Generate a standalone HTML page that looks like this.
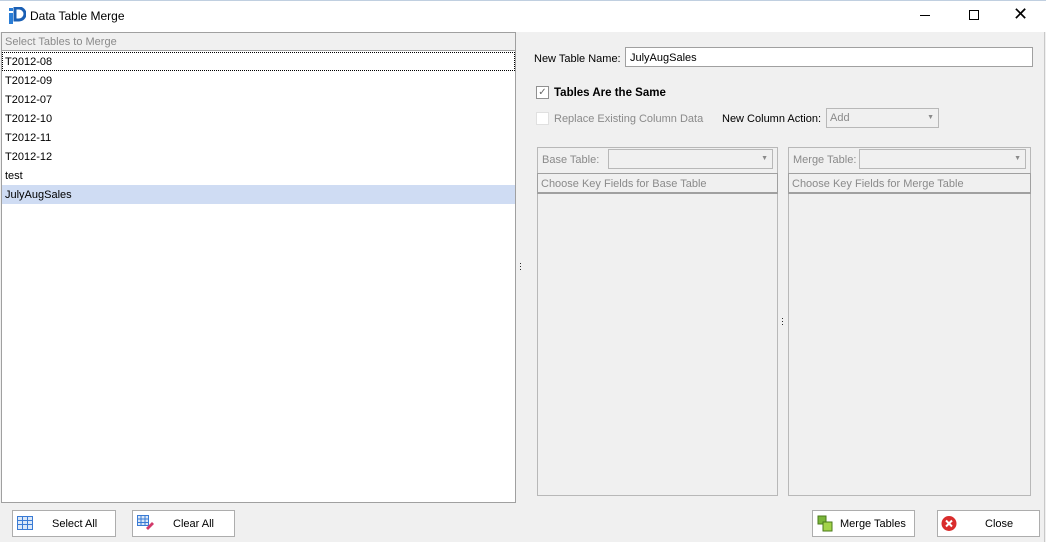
<html><head><style>
body{margin:0;width:1046px;height:542px;background:#f0f0f0;font-family:"Liberation Sans",sans-serif;font-size:11px;color:#000;position:relative;overflow:hidden}
.a{position:absolute}
.row{position:absolute;left:2px;width:513px;height:19px;line-height:21px;padding-left:3px;box-sizing:border-box}
.btn{position:absolute;top:510px;height:27px;border:1px solid #adadad;background:#fff;box-sizing:border-box;line-height:27px}
.g{color:#8a8a8a}
</style></head><body>
<div class="a" style="left:0;top:0;width:1046px;height:32px;background:#fff;border-top:1px solid #c0cfe0;box-sizing:border-box"></div>
<svg class="a" style="left:8px;top:7px" width="18" height="18" viewBox="0 0 18 18"><rect x="1" y="1" width="4" height="3" fill="#2a7dd6"/><rect x="1" y="6" width="4" height="11" fill="#2a7dd6"/><path d="M7 1h4a6 6 0 0 1 0 12H7z" fill="none" stroke="#1a5fb4" stroke-width="3"/></svg>
<div class="a" style="left:30px;top:9px;font-size:12px">Data Table Merge</div>
<div class="a" style="left:920px;top:15px;width:10px;height:1px;background:#000"></div>
<div class="a" style="left:969px;top:10px;width:8px;height:8px;border:1px solid #000"></div>
<div class="a" style="left:1013px;top:4px;font-size:18px">✕</div>
<div class="a" style="left:1px;top:32px;width:515px;height:471px;background:#fff;border:1px solid #a0a0a0;box-sizing:border-box"></div>
<div class="a g" style="left:2px;top:33px;width:513px;height:18px;background:#f0f0f0;border-bottom:1px solid #a0a0a0;line-height:19px;padding-left:3px;box-sizing:border-box">Select Tables to Merge</div>
<div class="row" style="top:52px;outline:1px dotted #000;outline-offset:-1px">T2012-08</div>
<div class="row" style="top:71px">T2012-09</div>
<div class="row" style="top:90px">T2012-07</div>
<div class="row" style="top:109px">T2012-10</div>
<div class="row" style="top:128px">T2012-11</div>
<div class="row" style="top:147px">T2012-12</div>
<div class="row" style="top:166px">test</div>
<div class="row" style="top:185px;background:#cfdcf3">JulyAugSales</div>
<div class="a" style="left:519px;top:262px;font-size:9px;line-height:3px">·<br>·<br>·</div>
<div class="a" style="left:534px;top:53px">New Table Name:</div>
<div class="a" style="left:625px;top:47px;width:408px;height:20px;background:#fff;border:1px solid #a0a0a0;box-sizing:border-box;padding:4px 4px">JulyAugSales</div>
<div class="a" style="left:536px;top:86px;width:13px;height:13px;background:#fff;border:1px solid #909090;box-sizing:border-box;font-size:10px;line-height:11px;text-align:center;color:#666">✓</div>
<div class="a" style="left:554px;top:87px;font-weight:bold;font-size:11.5px">Tables Are the Same</div>
<div class="a" style="left:536px;top:112px;width:13px;height:13px;background:#fff;border:1px solid #e0e0e0;box-sizing:border-box"></div>
<div class="a g" style="left:554px;top:113px">Replace Existing Column Data</div>
<div class="a" style="left:722px;top:113px">New Column Action:</div>
<div class="a g" style="left:826px;top:108px;width:113px;height:20px;border:1px solid #b8b8b8;box-sizing:border-box;padding:3px 3px">Add<span style="position:absolute;right:4px;top:5px;font-size:7px">▼</span></div>
<div class="a" style="left:537px;top:147px;width:241px;height:349px;border:1px solid #b8b8b8;box-sizing:border-box"></div>
<div class="a" style="left:788px;top:147px;width:243px;height:349px;border:1px solid #b8b8b8;box-sizing:border-box"></div>
<div class="a g" style="left:542px;top:154px">Base Table:</div>
<div class="a" style="left:608px;top:149px;width:165px;height:20px;border:1px solid #b8b8b8;box-sizing:border-box"><span class="g" style="position:absolute;right:4px;top:5px;font-size:7px">▼</span></div>
<div class="a g" style="left:793px;top:154px">Merge Table:</div>
<div class="a" style="left:859px;top:149px;width:167px;height:20px;border:1px solid #b8b8b8;box-sizing:border-box"><span class="g" style="position:absolute;right:4px;top:5px;font-size:7px">▼</span></div>
<div class="a g" style="left:537px;top:173px;width:241px;height:21px;border:1px solid #a0a0a0;border-bottom:2px solid #a0a0a0;box-sizing:border-box;padding:4px 3px 0">Choose Key Fields for Base Table</div>
<div class="a g" style="left:788px;top:173px;width:243px;height:21px;border:1px solid #a0a0a0;border-bottom:2px solid #a0a0a0;box-sizing:border-box;padding:4px 3px 0">Choose Key Fields for Merge Table</div>
<div class="a" style="left:781px;top:317px;font-size:9px;line-height:3px">·<br>·<br>·</div>
<div class="a" style="left:1044px;top:32px;width:1px;height:510px;background:#c8c8c8"></div>
<div class="btn" style="left:12px;width:104px"><svg class="a" style="left:4px;top:5px" width="16" height="14"><rect x=".5" y=".5" width="15" height="13" fill="#dbe8f8" stroke="#3a7bd5"/><path d="M0 4.5h16M0 8.5h16M5.5 0v14M10.5 0v14" stroke="#3a7bd5"/></svg><span class="a" style="left:39px">Select All</span></div>
<div class="btn" style="left:132px;width:103px"><svg class="a" style="left:4px;top:4px" width="18" height="16"><rect x=".5" y=".5" width="11" height="10" fill="#dbe8f8" stroke="#3a7bd5"/><path d="M0 4h12M0 7.5h12M4 0v11M8 0v11" stroke="#3a7bd5"/><path d="M9 13l6-6 2 2-6 6z" fill="#d23a6a"/></svg><span class="a" style="left:40px">Clear All</span></div>
<div class="btn" style="left:812px;width:103px"><svg class="a" style="left:4px;top:4px" width="16" height="17"><rect x="1" y="1" width="8" height="8" fill="#7ab53a" stroke="#4a7a1a"/><rect x="6" y="7" width="9" height="9" fill="#a3d34a" stroke="#4a7a1a"/></svg><span class="a" style="left:27px">Merge Tables</span></div>
<div class="btn" style="left:937px;width:103px"><svg class="a" style="left:3px;top:4px" width="16" height="17"><circle cx="8" cy="8.5" r="7.5" fill="#d92c2c"/><path d="M5 5.5l6 6M11 5.5l-6 6" stroke="#fff" stroke-width="2"/></svg><span class="a" style="left:47px">Close</span></div>
</body></html>
